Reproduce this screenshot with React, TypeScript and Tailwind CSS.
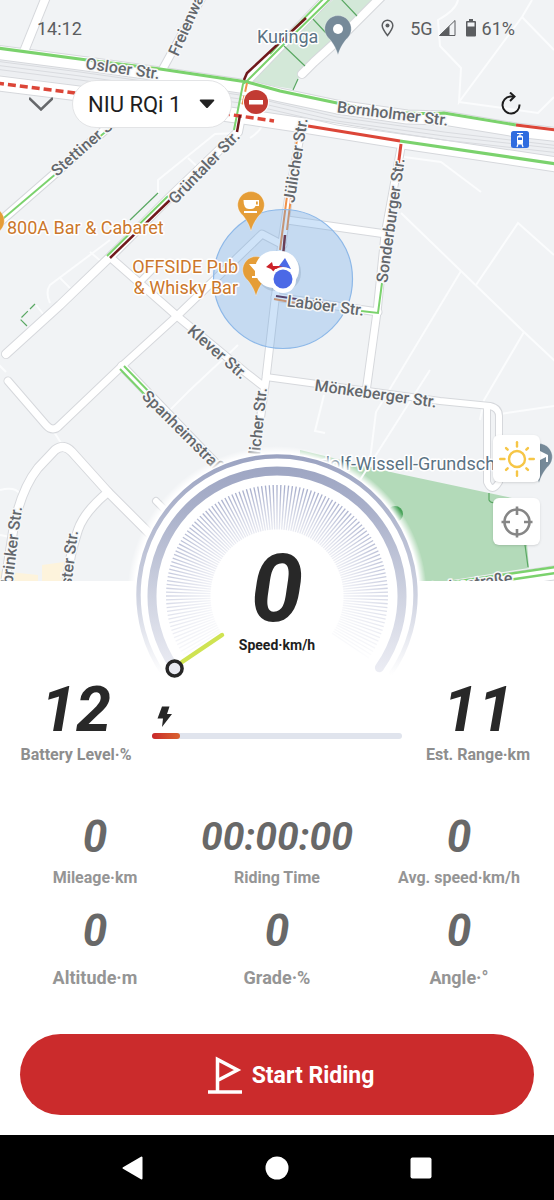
import React from "react";

type Line = { d: string; w: number };

const roads: Line[] = [
  { d: "M48 -8 L25 49", w: 8 },
  { d: "M206 -10 L160 74", w: 7 },
  { d: "M-5 52 L87 64 L160 74 L247 87 L280 95 L337 107 L407 117 L444 118 L516 130 L560 135", w: 13 },
  { d: "M-5 83 L75 93 L233 115 L307 126 L400 141 L560 165", w: 14 },
  { d: "M333 -8 L279 48 L248 80 L238 132 L168 199 L110 257 L60 305 L6 354", w: 8 },
  { d: "M384 -6 L335 43 L314 62 L302 74", w: 8 },
  { d: "M130 108 L-4 225", w: 8 },
  { d: "M302 126 L289 195 L281 250 L275 300 L266 378 L254 465", w: 7 },
  { d: "M287 220 L386 234", w: 7 },
  { d: "M283 245 L262 234 L177 316 L122 366 L60 425 Q53 433 46 425 L8 381", w: 7 },
  { d: "M111 258 L177 316 L245 372 L263 386", w: 7 },
  { d: "M140 282 L154 268", w: 6 },
  { d: "M402 142 L385 235 L377 312 L366 392", w: 7 },
  { d: "M275 297 L378 312", w: 7 },
  { d: "M266 377 L310 383 L440 401 L490 406 Q499 408 499 416 L499 482 Q492 494 487 482 L487 408", w: 6 },
  { d: "M122 366 L220 468", w: 8 },
  { d: "M4 590 L14 525 Q22 488 38 468 L55 450 Q64 443 72 452 L108 492 L150 534", w: 8 },
  { d: "M108 492 Q84 512 78 530 Q68 560 66 590", w: 8 },
  { d: "M156 501 L180 525", w: 6 },
  { d: "M440 590 L560 572", w: 13 },
];

const faint: Line[] = [
  { d: "M458 0 Q456 10 438 20 L440 46 L461 68 L459 102 L522 17 L532 0", w: 2 },
  { d: "M522 17 L554 50", w: 2 },
  { d: "M459 102 L538 113 L554 97", w: 2 },
  { d: "M404 157 L441 162 L481 192", w: 2 },
  { d: "M401 213 L461 271 L524 332 L556 362", w: 2 },
  { d: "M461 271 L376 412 L370 460", w: 2 },
  { d: "M476 285 L518 223 L554 255", w: 2 },
  { d: "M524 332 L484 400 L480 420", w: 2 },
  { d: "M430 370 L360 480", w: 2 },
  { d: "M324 395 L315 431 L325 433", w: 2 },
  { d: "M500 414 L554 406", w: 2 },
  { d: "M238 345 L190 390 L165 415", w: 2 },
  { d: "M238 133 L215 134 L158 180 L158 195", w: 2 },
  { d: "M110 240 L50 285 Q45 292 50 303", w: 2 },
  { d: "M90 252 L102 262 M60 278 L70 288 M36 305 L44 315", w: 2 },
  { d: "M-2 364 L6 372 M54 432 L63 446", w: 2 },
  { d: "M0 490 Q20 485 22 500 M0 535 L10 537", w: 2 },
  { d: "M188 158 L203 172", w: 2 },
  { d: "M250 138 Q262 130 262 124", w: 2 },
];

const tram: Line[] = [
  { d: "M-5 61 L80 72 L247 96 L337 117 L444 132 L560 146", w: 1 },
  { d: "M-5 65 L80 76 L247 100 L337 121 L444 136 L560 149", w: 1 },
  { d: "M-5 69 L80 80 L247 104 L337 125 L444 140 L560 153", w: 1 },
];

type Label = { t: string; x: number; y: number; r: number; anchor?: "start" | "middle" | "end" };

const streets: Label[] = [
  { t: "Osloer Str.", x: 122, y: 74, r: 8 },
  { t: "Bornholmer Str.", x: 392, y: 119, r: 7 },
  { t: "Freienwalder Str.", x: 178, y: 57, r: -66, anchor: "start" },
  { t: "Stettiner Str.", x: 57, y: 177, r: -41, anchor: "start" },
  { t: "Grüntaler Str.", x: 208, y: 171, r: -46 },
  { t: "Jülicher Str.", x: 301, y: 161, r: -81 },
  { t: "Sonderburger Str.", x: 396, y: 221, r: -82 },
  { t: "Klever Str.", x: 214, y: 356, r: 41 },
  { t: "Laböer Str.", x: 325, y: 311, r: 7 },
  { t: "Mönkeberger Str.", x: 375, y: 399, r: 8 },
  { t: "Spanheimstraße", x: 141, y: 397, r: 45, anchor: "start" },
  { t: "Jülicher Str.", x: 267, y: 388, r: -84, anchor: "end" },
  { t: "Stockholmbrinker Str.", x: 22, y: 507, r: -83, anchor: "end" },
  { t: "Münster Str.", x: 78, y: 531, r: -83, anchor: "end" },
  { t: "Bornholmstraße", x: 513, y: 583, r: -8, anchor: "end" },
];

function Pin({ x, y, color, children }: { x: number; y: number; color: string; children?: React.ReactNode }) {
  return (
    <g transform={`translate(${x} ${y})`}>
      <path d="M0 26 C-2 19 -4 16 -8 10.500 A13.300 13.300 0 1 1 8 10.500 C4 16 2 19 0 26Z" fill={color} stroke="#fff" strokeOpacity=".5" strokeWidth=".6" />
      {children}
    </g>
  );
}

function StreetMap() {
  return (
    <svg
      viewBox="0 0 554 581"
      preserveAspectRatio="xMidYMid slice"
      className="col-start-1 row-start-1 h-full w-full bg-[#f1f3f5]"
      role="img"
      aria-label="Map"
      fontFamily="Roboto, sans-serif"
      fill="none"
    >
      <path d="M0 571 L38 575 L38 581 L0 581Z M42 565 L64 562 L64 581 L42 581Z" fill="#fdf3dc" />
      <path d="M335 -2 L378 -2 L304 68 L293 89 L249 82 L280 48Z" fill="#d3e8d8" />
      <path d="M300 450 L395 473 L512 498 L525 520 L529 568 L440 582 L300 582Z" fill="#b3dab9" />
      {faint.map((r) => (
        <path key={r.d} d={r.d} stroke="#fbfcfd" strokeWidth={r.w} />
      ))}
      <path d="M-5 65 L80 76 L247 100 L337 121 L444 136 L560 149" stroke="#edeff2" strokeWidth="18" />
      {roads.map((r) => (
        <path key={r.d} d={r.d} stroke="#d6d8dc" strokeWidth={r.w + 2} strokeLinecap="round" strokeLinejoin="round" />
      ))}
      {roads.map((r) => (
        <path key={r.d} d={r.d} stroke="#fff" strokeWidth={r.w} strokeLinecap="round" strokeLinejoin="round" />
      ))}
      {tram.map((r) => (
        <path key={r.d} d={r.d} stroke="#d9dbdf" strokeWidth={r.w} />
      ))}

      <g stroke="#7bd26d" strokeWidth="3.200">
        <path d="M-2 48 L87 60 L160 69 L247 82 L280 91 L337 103 Q380 112 407 113 T444 113 L516 125" />
        <path d="M400 141 L556 164" />
        <path d="M440 584 L556 567" strokeWidth="2.500" />
        <path d="M440 590 L556 573" strokeWidth="2.500" />
      </g>
      <g stroke="#7bd26d" strokeWidth="2">
        <path d="M332 -3 L279 49 L248 80 L243 84 L234 130" />
        <path d="M328 -6 L279 44 L270 54" />
        <path d="M110 128 L-2 223" />
        <path d="M168 196 L107 256" />
        <path d="M120 369 L150 400 M124 366 L154 397" />
        <path d="M382 283 L378 313 L361 311" />
      </g>
      <g stroke="#dc4638">
        <path d="M-4 83 L75 93 L233 115 L274 121" strokeWidth="3.500" strokeDasharray="8 4" />
        <path d="M308 126 L400 141 M516 125 L556 130" strokeWidth="3.200" />
        <path d="M401 144 L397 175" strokeWidth="3" />
      </g>
      <g stroke="#70191c" strokeWidth="2.500">
        <path d="M306 18 L247 73 L244 80" />
        <path d="M240 115 L237 132" />
        <path d="M171 199 L110 258" />
        <path d="M285 235 L283 256" />
      </g>
      <g stroke="#f0914a" strokeWidth="2">
        <path d="M247 83 L242 107" strokeDasharray="9 4" />
        <path d="M297 140 L287 196 L280 250 M291 197 L287 230" />
        <path d="M274 299 L296 303" />
      </g>
      <path d="M276 296 L330 304" stroke="#54203a" strokeWidth="2" />
      <g stroke="#5aa863" strokeWidth="1.200">
        <path d="M341 -1 L357 16 M313 19 L326 33 M284 46 L305 66 M298 79 L293 90" />
        <path d="M158 193 L130 220" />
        <path d="M27 326 L20 319 L35 304" strokeDasharray="9 3" />
        <path d="M489 493 L489 500 Q491 504 496 502 M525 545 L528 567" />
      </g>

      <circle cx="283" cy="279" r="69.500" fill="#5b9ee6" fillOpacity=".29" stroke="#8db8e8" strokeWidth="1.200" />

      <g fontSize="16" fontWeight="500" fill="#63676c" stroke="#f6f7f8" strokeWidth="3" strokeLinejoin="round" paintOrder="stroke">
        {streets.map((s) => (
          <text key={`${s.t}${s.x}`} textAnchor={s.anchor ?? "middle"} transform={`translate(${s.x} ${s.y}) rotate(${s.r})`}>
            {s.t}
          </text>
        ))}
      </g>

      <g fontSize="18" stroke="#fff" strokeWidth="3" strokeLinejoin="round" paintOrder="stroke">
        <text x="257" y="43" fill="#5b7384">Kuringa</text>
        <text x="505" y="470" textAnchor="end" fill="#5b7384">Rudolf-Wissell-Grundschu</text>
        <g fill="#cb772b">
          <text x="7" y="234">800A Bar &amp; Cabaret</text>
          <text x="238" y="273" textAnchor="end">OFFSIDE Pub</text>
          <text x="238" y="294" textAnchor="end">&amp; Whisky Bar</text>
        </g>
      </g>

      <Pin x={338} y={29} color="#768a99"><circle r="5" fill="#fff" /></Pin>
      <Pin x={-9} y={221} color="#e59d37" />
      <Pin x={539} y={457} color="#768a99">
        <path d="M-6 -2 L1 -6 L9 -2 V5 H7 V0 L1 3 L-6 -1Z" fill="#fff" />
      </Pin>
      <Pin x={251} y={205} color="#e59d37">
        <path d="M-7.500 -5 H8 V1 H4.500 Q3.500 4 0 4 H-2 Q-7.500 4 -7.500 -5Z M-7 6 H6 V8 H-7Z" fill="#fff" />
        <path d="M5 -3.500 H6.800 V-.5 H5Z" fill="#e59d37" />
      </Pin>
      <Pin x={256} y={270} color="#e59d37">
        <path d="M-7 -6 H7 L1 1 V6 H4 V8 H-4 V6 H-1 V1Z" fill="#fff" />
      </Pin>
      <circle cx="395" cy="514" r="8" fill="#48a35a" />

      <circle cx="256" cy="102" r="13" fill="#fff" />
      <circle cx="256" cy="102" r="12" fill="#c23b33" />
      <rect x="249" y="100" width="14" height="4.500" fill="#fff" />
      <rect x="511" y="131" width="18" height="17" rx="2.500" fill="#2f6cdf" />
      <path d="M517 133.500 H523 M520 133.500 V136 M517 147 L518 144 M523 147 L522 144" stroke="#fff" strokeWidth="1.200" />
      <rect x="517" y="135.500" width="6" height="9" rx="1.500" fill="#fff" />
      <path d="M518 137.500 H522 V140 H518Z" fill="#2f6cdf" />

      <g>
        <rect x="257" y="254" width="44" height="37" rx="18" fill="#34506e" fillOpacity=".15" />
        <rect x="255" y="251" width="44" height="37" rx="18.500" fill="#fff" />
        <path d="M266 267 L272 262 L273 266 H286 V269 H275 L274 272 L271 269Z" fill="#cc2229" />
        <path d="M285 258 L291 269 L279 266Z" fill="#4b69e6" />
        <circle cx="283" cy="280" r="13" fill="#fff" />
        <circle cx="283" cy="279" r="9.500" fill="#4b69e6" />
      </g>
    </svg>
  );
}

function StatusBar() {
  return (
    <div className="flex h-14 items-center justify-between pr-[39px] pl-[37px] text-[18px] text-[#5b5d60]">
      <time>14:12</time>
      <div className="flex items-center">
        <svg width="13" height="18" viewBox="0 0 13 18" fill="none" className="mr-4" aria-label="Location">
          <path d="M6.500 16.500 C3 12 1.200 9 1.200 6.500 A5.300 5.300 0 0 1 11.800 6.500 C11.800 9 10 12 6.500 16.500Z" stroke="#5b5d60" strokeWidth="1.500" />
          <circle cx="6.500" cy="6.500" r="2" fill="#5b5d60" />
        </svg>
        <span>5G</span>
        <svg width="17" height="16" viewBox="0 0 17 16" className="mr-2.5 ml-1.5" aria-label="Signal">
          <path d="M.5 15.500 L16 .5 V15.500Z" fill="none" stroke="#5b5d60" strokeWidth="1" />
          <path d="M.5 15.500 L10.500 6 V15.500Z" fill="#5b5d60" />
        </svg>
        <svg width="10" height="18" viewBox="0 0 10 18" className="mr-1.5" aria-label="Battery">
          <path d="M3 0 H7 V2 H9 Q10 2 10 3 V16.500 Q10 17.500 9 17.500 H1 Q0 17.500 0 16.500 V3 Q0 2 1 2 H3Z" fill="#5b5d60" />
          <rect x="1.500" y="3.500" width="7" height="4" fill="#f1f3f5" />
        </svg>
        <span>61%</span>
      </div>
    </div>
  );
}

function Toolbar() {
  return (
    <div className="mt-6 flex items-center pr-8 pl-7">
      <button aria-label="Collapse" className="p-px">
        <svg width="24" height="14" viewBox="0 0 24 14" fill="none">
          <path d="M0 1 L12 12.500 L24 1" stroke="#66686b" strokeWidth="2.500" />
        </svg>
      </button>
      <div className="ml-[18px] grid h-12 w-[160px] items-center rounded-full border border-[#e3e4e6] bg-white">
        <select
          aria-label="Vehicle"
          className="col-start-1 row-start-1 h-full w-full appearance-none rounded-full bg-transparent pl-[15px] text-[22px] text-[#1e1e1e]"
        >
          <option>NIU RQi 1</option>
        </select>
        <svg width="16" height="10" viewBox="0 0 16 10" className="pointer-events-none col-start-1 row-start-1 mr-4 justify-self-end">
          <path d="M1.500 .5 H14.500 Q16 .8 15 2 L9 8.500 Q8 9.500 7 8.500 L1 2 Q0 .8 1.500 .5Z" fill="#222" />
        </svg>
      </div>
      <button aria-label="Refresh" className="ml-auto">
        <svg width="22" height="24" viewBox="0 0 22 24" fill="none" stroke="#1c1c1c" strokeWidth="2">
          <path d="M13 4.500 H10.500 A8.500 8.500 0 1 0 19.500 12.500" />
          <path d="M10 .5 L14.500 4.500 L10 9" />
        </svg>
      </button>
    </div>
  );
}

const rays = [0, 45, 90, 135, 180, 225, 270, 315];

function MapControls() {
  return (
    <div className="mt-auto mr-3.5 mb-9 flex flex-col gap-4 self-end">
      <button aria-label="Day mode" className="grid size-[47px] place-items-center rounded-md bg-white shadow-sm">
        <svg width="36" height="36" viewBox="-18 -18 36 36" fill="none" stroke="#f6c646" strokeWidth="2.400" strokeLinecap="round">
          <circle r="8" />
          {rays.map((a) => (
            <path key={a} d={a % 90 ? "M13.200 0 H15.500" : "M12.500 0 H16.800"} transform={`rotate(${a})`} />
          ))}
        </svg>
      </button>
      <button aria-label="Center map" className="grid size-[47px] place-items-center rounded-md bg-white shadow-sm">
        <svg width="32" height="32" viewBox="-16 -16 32 32" fill="none" stroke="#868686" strokeWidth="2.600">
          <circle r="12.500" />
          <path d="M0 -15.500 V-7 M0 15.500 V7 M-15.500 0 H-7 M15.500 0 H7" />
        </svg>
      </button>
    </div>
  );
}

const ticks = Array.from({ length: 125 }, (_, i) => 146 + i * 2);

function Speedometer() {
  return (
    <section className="relative mx-auto -mt-[136px] grid w-[300px] font-bold">
      <svg viewBox="0 0 300 238" className="col-start-1 row-start-1 h-[238px] w-[300px]" fill="none" aria-hidden="true">
        <defs>
          <linearGradient id="ring" gradientUnits="userSpaceOnUse" x1="0" y1="10" x2="0" y2="228">
            <stop offset="0" stopColor="#9ba3c1" />
            <stop offset=".25" stopColor="#a9b0ca" />
            <stop offset=".65" stopColor="#cfd3e1" />
            <stop offset="1" stopColor="#ecedf4" />
          </linearGradient>
          <linearGradient id="rim" gradientUnits="userSpaceOnUse" x1="0" y1="10" x2="0" y2="230">
            <stop offset="0" stopColor="#9ba3c1" />
            <stop offset=".65" stopColor="#cfd3e1" />
            <stop offset="1" stopColor="#fff" />
          </linearGradient>
          <radialGradient id="tickColor" gradientUnits="userSpaceOnUse" cx="150" cy="151" r="111">
            <stop offset=".6" stopColor="#a4abca" stopOpacity=".3" />
            <stop offset="1" stopColor="#a4abca" />
          </radialGradient>
          <linearGradient id="fade" gradientUnits="userSpaceOnUse" x1="0" y1="38" x2="0" y2="216">
            <stop offset="0" stopColor="#fff" stopOpacity="0" />
            <stop offset=".5" stopColor="#fff" stopOpacity=".35" />
            <stop offset="1" stopColor="#fff" stopOpacity="1" />
          </linearGradient>
          <radialGradient id="halo" gradientUnits="userSpaceOnUse" cx="150" cy="151" r="150">
            <stop offset=".95" stopColor="#fff" />
            <stop offset="1" stopColor="#fff" stopOpacity="0" />
          </radialGradient>
        </defs>
        <circle cx="150" cy="151" r="150" fill="url(#halo)" />
        <path d="M37 230 A138.500 138.500 0 1 1 263 230" stroke="url(#rim)" strokeWidth="4.400" />
        <g>
          {ticks.map((a) => {
            const rad = (a * Math.PI) / 180;
            const c = Math.cos(rad);
            const s = Math.sin(rad);
            return (
              <path
                key={a}
                d={`M${150 + c * 66.5} ${151 + s * 66.5} L${150 + c * 111} ${151 + s * 111}`}
                stroke="url(#tickColor)"
                strokeWidth="1.300"
              />
            );
          })}
        </g>
        <circle cx="150" cy="151" r="114" fill="url(#fade)" />
        <path d="M47.600 222.700 A125 125 0 1 1 252.400 222.700" stroke="url(#ring)" strokeWidth="9" strokeLinecap="round" />
        <path d="M55 217 L95 190" stroke="#cfe352" strokeWidth="4.500" strokeLinecap="round" />
        <circle cx="47.600" cy="223.500" r="7.500" fill="#e8e9f1" stroke="#262626" strokeWidth="3.500" />
      </svg>
      <div className="col-start-1 row-start-1 flex flex-col items-center pt-[104px]">
        <output className="text-[94px] leading-[80px] text-[#282828] italic">0</output>
        <span className="mt-1 text-[14px] leading-6 text-[#1e1e1e]">Speed·km/h</span>
      </div>
    </section>
  );
}

function Summary({ value, label }: { value: string; label: string }) {
  return (
    <div className="flex w-28 flex-col items-center whitespace-nowrap">
      <span className="text-[63px] leading-[54px] font-bold text-[#282828] italic">{value}</span>
      <span className="mt-1.5 text-[16px] leading-6 font-bold text-[#8e8e8e]">{label}</span>
    </div>
  );
}

function BatteryRow() {
  return (
    <section className="flex items-start gap-5 px-5">
      <Summary value="12" label="Battery Level·%" />
      <div className="flex flex-1 flex-col pt-[23px]">
        <svg width="15" height="21" viewBox="0 0 15 21" className="ml-[5px]" aria-hidden="true">
          <path d="M5 .5 H12.500 L10 8 H15 L5 21 L6 12.500 H.5Z" fill="#262626" />
        </svg>
        <div className="mt-1.5 h-[6px] rounded-full bg-[#e0e4ed]" role="progressbar" aria-valuenow={12} aria-label="Battery">
          <div className="h-full w-[11%] rounded-full bg-linear-to-r from-[#c9252a] to-[#d9622f]" />
        </div>
      </div>
      <Summary value="11" label="Est. Range·km" />
    </section>
  );
}

const rideStats = [
  { value: "0", label: "Mileage·km" },
  { value: "00:00:00", label: "Riding Time" },
  { value: "0", label: "Avg. speed·km/h" },
];

const terrainStats = [
  { value: "0", label: "Altitude·m" },
  { value: "0", label: "Grade·%" },
  { value: "0", label: "Angle·°" },
];

function Stats() {
  return (
    <section className="px-1 text-center">
      <dl className="mt-[51px] grid grid-cols-3">
        {rideStats.map((s) => (
          <div key={s.label} className="flex flex-col-reverse gap-2.5">
            <dt className="text-[16px] leading-6 font-bold text-[#959595]">{s.label}</dt>
            <dd className={`leading-[38px] font-bold text-[#686868] italic ${s.value.length > 1 ? "text-[39px]" : "text-[44px]"}`}>
              {s.value}
            </dd>
          </div>
        ))}
      </dl>
      <dl className="mt-[22px] grid grid-cols-3">
        {terrainStats.map((s) => (
          <div key={s.label} className="flex flex-col-reverse gap-4">
            <dt className="text-[18px] leading-6 font-bold text-[#959595]">{s.label}</dt>
            <dd className="text-[44px] leading-[38px] font-bold text-[#686868] italic">{s.value}</dd>
          </div>
        ))}
      </dl>
    </section>
  );
}

function SystemNav() {
  return (
    <nav className="mt-auto flex h-[65px] items-center justify-center gap-[120px] bg-black">
      <button aria-label="Back">
        <svg width="24" height="24" viewBox="0 0 24 24" fill="#fff" stroke="#fff" strokeWidth="2" strokeLinejoin="round">
          <path d="M2.500 12 L20.500 1.500 V22.500Z" />
        </svg>
      </button>
      <button aria-label="Home">
        <svg width="24" height="24" viewBox="0 0 24 24" fill="#fff">
          <circle cx="12" cy="12" r="11.500" />
        </svg>
      </button>
      <button aria-label="Recent apps">
        <svg width="24" height="24" viewBox="0 0 24 24" fill="#fff">
          <rect x="1.500" y="1.500" width="21" height="21" rx="2" />
        </svg>
      </button>
    </nav>
  );
}

export default function App() {
  return (
    <main className="flex min-h-screen flex-col bg-white font-['Roboto',sans-serif]">
      <header className="grid h-[581px] grid-cols-1 grid-rows-[581px] overflow-hidden">
        <StreetMap />
        <div className="relative col-start-1 row-start-1 flex flex-col">
          <StatusBar />
          <Toolbar />
          <MapControls />
        </div>
      </header>
      <Speedometer />
      <BatteryRow />
      <Stats />
      <div className="mt-11 mb-5 px-5">
        <button className="flex h-[81px] w-full items-center justify-center gap-2.5 rounded-full bg-[#cb2b2c] text-[23px] font-bold text-white">
          <svg width="34" height="38" viewBox="0 0 34 38" fill="none" stroke="#fff" strokeWidth="3.500" className="ml-7" aria-hidden="true">
            <path d="M9.500 35 V3.500 L29.500 14 L9.500 24.500" />
            <path d="M0 36 H34" />
          </svg>
          <span className="pt-1">Start Riding</span>
        </button>
      </div>
      <SystemNav />
    </main>
  );
}
